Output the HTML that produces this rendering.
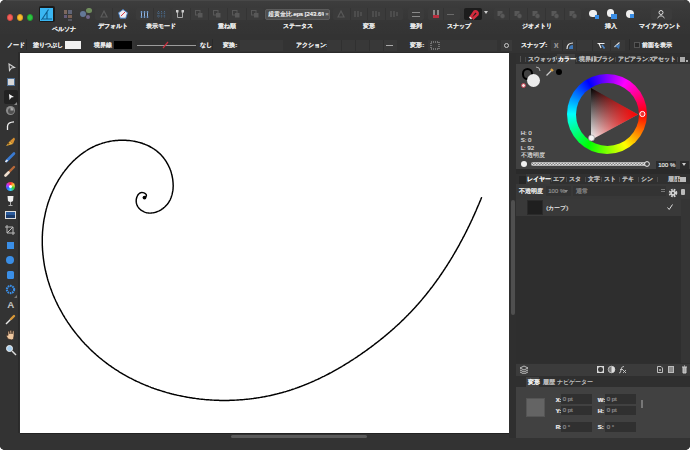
<!DOCTYPE html>
<html><head><meta charset="utf-8">
<style>
*{box-sizing:border-box;margin:0;padding:0}
html,body{width:690px;height:450px;overflow:hidden;background:#fff}
body{font-family:"Liberation Sans",sans-serif;position:relative}
#win{position:absolute;left:0;top:0;width:690px;height:450px;background:#333;border-radius:5px;overflow:hidden}
.a{position:absolute}
.t{position:absolute;white-space:nowrap;line-height:7px;text-shadow:0.45px 0 0 currentColor}
</style></head><body><div id="win">
<div class="a" style="left:0px;top:0px;width:690px;height:34px;background:linear-gradient(#3e3e3e,#393939 10px,#353535 24px,#343434);"></div>
<div class="a" style="left:0px;top:34px;width:690px;height:19px;background:#333;"></div>
<div class="a" style="left:6px;top:0px;width:678px;height:1px;background:#484848;"></div>
<div class="a" style="left:0px;top:53px;width:20px;height:397px;background:#333;"></div>
<div class="a" style="left:0px;top:433px;width:690px;height:17px;background:#333;"></div>
<div class="a" style="left:6.6px;top:14.1px;width:6.8px;height:6.8px;border-radius:50%;background:#f4605a;border:0.5px solid #d04a44"></div>
<div class="a" style="left:16.6px;top:14.1px;width:6.8px;height:6.8px;border-radius:50%;background:#f8bd30;border:0.5px solid #d49a20"></div>
<div class="a" style="left:26.6px;top:14.1px;width:6.8px;height:6.8px;border-radius:50%;background:#2dc443;border:0.5px solid #20a030"></div>
<div class="a" style="left:38.5px;top:5.5px;width:16px;height:16px;background:#1a1a1a;border-radius:2px"></div>
<div class="a" style="left:40px;top:7.5px;width:13px;height:13px;background:#3ab6f2;"></div>
<svg class="a" style="left:40px;top:7.5px" width="13" height="13"><path d="M1.5,12 L8.5,1.5 M7,4 L7,11.5 M3,11 L12,11" stroke="#0e5d8c" stroke-width="1.1" fill="none"/></svg>
<div class="t" style="left:64px;top:25.5px;font-size:6px;color:#e8e8e8;font-weight:bold;transform:translateX(-50%);">ペルソナ</div>
<div class="a" style="left:63.5px;top:10px;width:3.5px;height:3.5px;background:#8f7468;opacity:.8"></div>
<div class="a" style="left:68px;top:10px;width:3.5px;height:3.5px;background:#6c7088;opacity:.8"></div>
<div class="a" style="left:63.5px;top:14.5px;width:3.5px;height:3.5px;background:#706488;opacity:.8"></div>
<div class="a" style="left:68px;top:14.5px;width:3.5px;height:3.5px;background:#8c6c5c;opacity:.8"></div>
<div class="a" style="left:68px;top:19px;width:3.5px;height:2px;background:#555560;"></div>
<div class="a" style="left:80.4px;top:11px;width:6px;height:6px;border-radius:50%;background:#6c84a8;opacity:.85"></div>
<div class="a" style="left:86.4px;top:8.200000000000001px;width:5.2px;height:5.2px;border-radius:50%;background:#7a9c64;opacity:.85"></div>
<div class="a" style="left:86.2px;top:15.399999999999999px;width:4px;height:4px;border-radius:50%;background:#7c7098;opacity:.85"></div>
<div class="a" style="left:95px;top:8px;width:34px;height:12px;background:#3b3b3b;border-radius:2px"></div>
<div class="a" style="left:112px;top:8px;width:1px;height:12px;background:#343434;"></div>
<svg class="a" style="left:99px;top:9px" width="10" height="10"><path d="M2,8 L5,2 L8,8 Z" fill="none" stroke="#5c5c5c" stroke-width="1.2"/></svg>
<svg class="a" style="left:117px;top:8px" width="12" height="12"><polygon points="6,1.5 10.5,4.8 8.8,10.2 3.2,10.2 1.5,4.8" fill="#efedf2" stroke="#3f7cc4" stroke-width="0.9"/><path d="M4,8 L8,4" stroke="#d23848" stroke-width="1"/></svg>
<div class="t" style="left:113px;top:23px;font-size:6px;color:#e8e8e8;font-weight:bold;transform:translateX(-50%);">デフォルト</div>
<div class="a" style="left:136px;top:8px;width:34px;height:12px;background:#3b3b3b;border-radius:2px"></div>
<div class="a" style="left:153px;top:8px;width:1px;height:12px;background:#343434;"></div>
<svg class="a" style="left:140px;top:10px" width="9" height="9"><path d="M1.5,1 V8 M4.5,1 V8 M7.5,1 V8" stroke="#8fb6e6" stroke-width="1"/><path d="M0,2 H9 M0,7 H9" stroke="#4a6a90" stroke-width="0.8"/></svg>
<svg class="a" style="left:157px;top:10px" width="9" height="9"><path d="M1.5,1 V8 M4.5,1 V8 M7.5,1 V8 M0,3 H9 M0,6 H9" stroke="#4a6a8a" stroke-width="1" stroke-dasharray="1 1.2"/></svg>
<div class="t" style="left:161px;top:23px;font-size:6px;color:#e8e8e8;font-weight:bold;transform:translateX(-50%);">表示モード</div>
<div class="a" style="left:172px;top:8px;width:92px;height:12px;background:#3b3b3b;border-radius:2px"></div>
<div class="a" style="left:190px;top:8px;width:1px;height:12px;background:#343434;"></div>
<div class="a" style="left:208px;top:8px;width:1px;height:12px;background:#343434;"></div>
<div class="a" style="left:227px;top:8px;width:1px;height:12px;background:#343434;"></div>
<div class="a" style="left:246px;top:8px;width:1px;height:12px;background:#343434;"></div>
<svg class="a" style="left:175px;top:9px" width="10" height="10"><path d="M2.5,3 V8.5 H7.5 V3" fill="none" stroke="#aaa" stroke-width="1"/><rect x="1" y="1" width="2.5" height="2.5" fill="#ccc"/><rect x="6.5" y="1" width="2.5" height="2.5" fill="#ccc"/></svg>
<svg class="a" style="left:194px;top:9px" width="10" height="10"><rect x="1.5" y="1.5" width="4.5" height="4.5" fill="none" stroke="#585858" stroke-width="1"/><rect x="4" y="4" width="4.5" height="4.5" fill="#585858"/></svg>
<svg class="a" style="left:212px;top:9px" width="10" height="10"><rect x="1.5" y="1.5" width="4.5" height="4.5" fill="none" stroke="#585858" stroke-width="1"/><rect x="4" y="4" width="4.5" height="4.5" fill="#585858"/></svg>
<svg class="a" style="left:231px;top:9px" width="10" height="10"><rect x="1.5" y="1.5" width="4.5" height="4.5" fill="none" stroke="#585858" stroke-width="1"/><rect x="4" y="4" width="4.5" height="4.5" fill="#585858"/></svg>
<svg class="a" style="left:250px;top:9px" width="10" height="10"><rect x="1.5" y="1.5" width="4.5" height="4.5" fill="none" stroke="#585858" stroke-width="1"/><rect x="4" y="4" width="4.5" height="4.5" fill="#585858"/></svg>
<div class="t" style="left:227px;top:23px;font-size:6px;color:#e8e8e8;font-weight:bold;transform:translateX(-50%);">重ね順</div>
<div class="a" style="left:265px;top:8.5px;width:65px;height:11px;background:#4e4e4e;border-radius:2px;border:0.5px solid #5c5c5c"></div>
<div class="t" style="left:267.5px;top:10.5px;font-size:6px;color:#f0f0f0;font-weight:normal;width:56px;overflow:hidden">超黄金比.eps [243.6%]</div>
<div class="t" style="left:325px;top:10.5px;font-size:6px;color:#aaa;font-weight:normal;">×</div>
<div class="t" style="left:298px;top:23px;font-size:6px;color:#e8e8e8;font-weight:bold;transform:translateX(-50%);">ステータス</div>
<div class="a" style="left:333px;top:8px;width:70px;height:12px;background:#3b3b3b;border-radius:2px"></div>
<div class="a" style="left:350px;top:8px;width:1px;height:12px;background:#343434;"></div>
<div class="a" style="left:367px;top:8px;width:1px;height:12px;background:#343434;"></div>
<div class="a" style="left:385px;top:8px;width:1px;height:12px;background:#343434;"></div>
<svg class="a" style="left:336px;top:9px" width="10" height="10"><path d="M2,8 L5,2 L8,8 Z" fill="none" stroke="#585858" stroke-width="1.2"/></svg>
<svg class="a" style="left:353px;top:9px" width="10" height="10"><path d="M2,2 V8 M5,2 V8 M8,3 V7" stroke="#585858" stroke-width="1.3"/></svg>
<svg class="a" style="left:371px;top:9px" width="10" height="10"><path d="M2,2 V8 M5,2 V8 M8,3 V7" stroke="#585858" stroke-width="1.3"/></svg>
<svg class="a" style="left:389px;top:9px" width="10" height="10"><path d="M2,2 V8 M5,2 V8 M8,3 V7" stroke="#585858" stroke-width="1.3"/></svg>
<div class="t" style="left:369px;top:23px;font-size:6px;color:#e8e8e8;font-weight:bold;transform:translateX(-50%);">変形</div>
<div class="a" style="left:408px;top:8px;width:16px;height:12px;background:#3b3b3b;border-radius:2px"></div>
<div class="a" style="left:412px;top:12px;width:8px;height:1.2px;background:#8a8a8a;"></div>
<div class="a" style="left:412px;top:15.5px;width:8px;height:1.2px;background:#8a8a8a;"></div>
<div class="t" style="left:416px;top:23px;font-size:6px;color:#e8e8e8;font-weight:bold;transform:translateX(-50%);">整列</div>
<div class="a" style="left:428px;top:8px;width:32px;height:12px;background:#3b3b3b;border-radius:2px"></div>
<div class="a" style="left:443px;top:8px;width:1px;height:12px;background:#343434;"></div>
<div class="a" style="left:433px;top:10px;width:1.5px;height:8px;background:#8a8a8a;"></div>
<div class="a" style="left:437px;top:10px;width:1.5px;height:8px;background:#8a8a8a;"></div>
<div class="a" style="left:432.5px;top:14.5px;width:6px;height:3px;background:#b83040;"></div>
<div class="a" style="left:447px;top:13.5px;width:7px;height:1.5px;background:#6a6a6a;"></div>
<div class="a" style="left:464px;top:7.5px;width:17.5px;height:12.5px;background:#1c1c1c;border-radius:2px"></div>
<svg class="a" style="left:466px;top:8px" width="14" height="12"><path d="M4.5,9.5 L8.5,3.5 A2.3,2.3 0 0 1 11.5,6.5 L6.5,11" stroke="#d42a3c" stroke-width="2.6" fill="none"/><path d="M3.5,9 L5.5,11" stroke="#eee" stroke-width="1.2"/></svg>
<svg class="a" style="left:484px;top:11px" width="5" height="4"><polygon points="0,0 4,0 2,3" fill="#ccc"/></svg>
<div class="t" style="left:459px;top:23px;font-size:6px;color:#e8e8e8;font-weight:bold;transform:translateX(-50%);">スナップ</div>
<div class="a" style="left:494px;top:8px;width:87px;height:12px;background:#3b3b3b;border-radius:2px"></div>
<div class="a" style="left:509px;top:8px;width:1px;height:12px;background:#343434;"></div>
<div class="a" style="left:527px;top:8px;width:1px;height:12px;background:#343434;"></div>
<div class="a" style="left:545px;top:8px;width:1px;height:12px;background:#343434;"></div>
<div class="a" style="left:564px;top:8px;width:1px;height:12px;background:#343434;"></div>
<svg class="a" style="left:496px;top:9px" width="10" height="10"><rect x="1.5" y="2" width="5" height="5" fill="#585858"/><circle cx="6.5" cy="7" r="2.5" fill="#585858" stroke="#3c3c3c" stroke-width="0.6"/></svg>
<svg class="a" style="left:513px;top:9px" width="10" height="10"><rect x="1.5" y="2" width="5" height="5" fill="#585858"/><circle cx="6.5" cy="7" r="2.5" fill="#585858" stroke="#3c3c3c" stroke-width="0.6"/></svg>
<svg class="a" style="left:531px;top:9px" width="10" height="10"><rect x="1.5" y="2" width="5" height="5" fill="#585858"/><circle cx="6.5" cy="7" r="2.5" fill="#585858" stroke="#3c3c3c" stroke-width="0.6"/></svg>
<svg class="a" style="left:550px;top:9px" width="10" height="10"><rect x="1.5" y="2" width="5" height="5" fill="#585858"/><circle cx="6.5" cy="7" r="2.5" fill="#585858" stroke="#3c3c3c" stroke-width="0.6"/></svg>
<svg class="a" style="left:568px;top:9px" width="10" height="10"><rect x="1.5" y="2" width="5" height="5" fill="#585858"/><circle cx="6.5" cy="7" r="2.5" fill="#585858" stroke="#3c3c3c" stroke-width="0.6"/></svg>
<div class="t" style="left:537px;top:23px;font-size:6px;color:#e8e8e8;font-weight:bold;transform:translateX(-50%);">ジオメトリ</div>
<div class="a" style="left:585px;top:8px;width:55px;height:12px;background:#393939;border-radius:2px"></div>
<div class="a" style="left:589.4px;top:9.9px;width:7.2px;height:7.2px;border-radius:50%;background:#f0f0f0;"></div>
<div class="a" style="left:595px;top:15px;width:4px;height:4px;background:#3a8ee6;"></div>
<div class="a" style="left:606.9px;top:9.4px;width:7.2px;height:7.2px;border-radius:50%;background:#f0f0f0;"></div>
<div class="a" style="left:611px;top:13.5px;width:5.5px;height:5px;background:#3a8ee6;"></div>
<div class="a" style="left:626px;top:10.2px;width:8px;height:8px;border-radius:50%;background:#f0f0f0;"></div>
<div class="a" style="left:630px;top:14.2px;width:4px;height:4.2px;background:#3a8ee6;"></div>
<div class="t" style="left:611px;top:22.5px;font-size:6px;color:#e8e8e8;font-weight:bold;transform:translateX(-50%);">挿入</div>
<div class="a" style="left:651px;top:8px;width:21px;height:12px;background:#3b3b3b;border-radius:2px"></div>
<svg class="a" style="left:656px;top:9px" width="10" height="10"><circle cx="5" cy="3.5" r="2" fill="none" stroke="#ddd" stroke-width="1"/><path d="M1.5,9 Q5,4.5 8.5,9" fill="none" stroke="#ddd" stroke-width="1"/></svg>
<div class="t" style="left:660px;top:22.5px;font-size:6px;color:#e8e8e8;font-weight:bold;transform:translateX(-50%);">マイアカウント</div>
<div class="t" style="left:7px;top:42px;font-size:6px;color:#e8e8e8;font-weight:bold;">ノード</div>
<div class="a" style="left:26px;top:39px;width:1px;height:11px;background:#2a2a2a;"></div>
<div class="t" style="left:33px;top:42px;font-size:6px;color:#e8e8e8;font-weight:bold;">塗りつぶし</div>
<div class="a" style="left:65px;top:41px;width:16px;height:8px;background:#f0f0f0;"></div>
<div class="t" style="left:94px;top:42px;font-size:6px;color:#e8e8e8;font-weight:bold;">境界線</div>
<div class="a" style="left:114px;top:40.5px;width:18px;height:8.5px;background:#000;"></div>
<div class="a" style="left:135px;top:40px;width:62px;height:10px;background:#303030;"></div>
<div class="a" style="left:137px;top:45px;width:59px;height:1px;background:#9a9a9a;"></div>
<svg class="a" style="left:162px;top:41px" width="7" height="8"><path d="M1,7 L6,1" stroke="#c83040" stroke-width="1.2"/></svg>
<div class="t" style="left:200px;top:42px;font-size:6px;color:#e8e8e8;font-weight:bold;">なし</div>
<div class="a" style="left:212px;top:39px;width:1px;height:11px;background:#2a2a2a;"></div>
<div class="t" style="left:223px;top:42px;font-size:6px;color:#e8e8e8;font-weight:bold;">変換:</div>
<div class="a" style="left:240px;top:40px;width:43px;height:10.5px;background:#383838;"></div>
<div class="t" style="left:296px;top:42px;font-size:6px;color:#e8e8e8;font-weight:bold;">アクション:</div>
<div class="a" style="left:327px;top:40px;width:70px;height:10.5px;background:#383838;"></div>
<div class="a" style="left:341px;top:40px;width:1px;height:10.5px;background:#303030;"></div>
<div class="a" style="left:355px;top:40px;width:1px;height:10.5px;background:#303030;"></div>
<div class="a" style="left:369px;top:40px;width:1px;height:10.5px;background:#303030;"></div>
<div class="a" style="left:383px;top:40px;width:1px;height:10.5px;background:#303030;"></div>
<div class="a" style="left:386px;top:45px;width:7px;height:1px;background:#aaa;"></div>
<div class="t" style="left:410px;top:42px;font-size:6px;color:#e8e8e8;font-weight:bold;">変形:</div>
<div class="a" style="left:428px;top:40px;width:69px;height:10.5px;background:#383838;"></div>
<svg class="a" style="left:430px;top:41px" width="10" height="9"><rect x="1" y="1" width="8" height="7" fill="none" stroke="#ccc" stroke-width="0.8" stroke-dasharray="1 1"/></svg>
<div class="a" style="left:501px;top:40px;width:11px;height:10.5px;background:#3a3a3a;"></div>
<div class="a" style="left:504.0px;top:42.5px;width:5.0px;height:5.0px;border-radius:50%;background:none;border:1px solid #ccc"></div>
<div class="t" style="left:521px;top:42px;font-size:6px;color:#e8e8e8;font-weight:bold;">スナップ:</div>
<div class="a" style="left:551px;top:40px;width:74px;height:10.5px;background:#383838;"></div>
<div class="a" style="left:562px;top:40px;width:1px;height:10.5px;background:#303030;"></div>
<div class="a" style="left:576px;top:40px;width:1px;height:10.5px;background:#303030;"></div>
<div class="a" style="left:592px;top:40px;width:1px;height:10.5px;background:#303030;"></div>
<div class="a" style="left:610px;top:40px;width:1px;height:10.5px;background:#303030;"></div>
<div class="t" style="left:554px;top:42px;font-size:6px;color:#bbb;font-weight:normal;">)(</div>
<svg class="a" style="left:565px;top:41px" width="10" height="9"><path d="M2,8 Q2,2 8,2" stroke="#e8e8e8" stroke-width="1.2" fill="none"/><path d="M4,8 Q4,4 8,4 L8,8 Z" fill="#3f78b8"/></svg>
<svg class="a" style="left:596px;top:41px" width="10" height="9"><path d="M1.5,2.5 L8.5,2.5 M3,2.5 L5,7" stroke="#eee" stroke-width="1.2" fill="none"/><path d="M6,4 L8.5,7.5" stroke="#4a86c8" stroke-width="1.6"/></svg>
<svg class="a" style="left:613px;top:41px" width="9" height="9"><path d="M1.5,6 L6.5,1.5" stroke="#ddd" stroke-width="1.2"/><path d="M2,5 L6,8 L7,3 Z" fill="#3f78b8"/></svg>
<div class="a" style="left:629px;top:39px;width:1px;height:11px;background:#2a2a2a;"></div>
<div class="a" style="left:634px;top:42px;width:6px;height:6px;background:#2a2a2a;border:1px solid #555"></div>
<div class="t" style="left:642px;top:42px;font-size:6px;color:#e8e8e8;font-weight:bold;">前面を表示</div>
<div class="a" style="left:18px;top:53px;width:1px;height:380px;background:#2a2a2a;"></div>
<div class="a" style="left:19px;top:53px;width:1px;height:380px;background:#2e2e2e;"></div>
<svg class="a" style="left:6px;top:62px" width="10" height="10"><path d="M3,2 L8.5,5.5 L5.5,6 L3.5,8.5 Z" fill="#333" stroke="#cfcfcf" stroke-width="1.1"/></svg>
<div class="a" style="left:6.5px;top:77.5px;width:8px;height:8px;background:#4f6f94;"></div>
<div class="a" style="left:7.5px;top:78.5px;width:6px;height:6px;background:#d8d8d8;"></div>
<div class="a" style="left:3.5px;top:89.5px;width:14px;height:14px;background:#222;border-radius:2px"></div>
<svg class="a" style="left:6px;top:92px" width="10" height="10"><path d="M3,2 L8,5 L5.3,5.6 L3.5,8 Z" fill="#f4f4f4"/></svg>
<svg class="a" style="left:14px;top:102px" width="3" height="3"><polygon points="3,0 3,3 0,3" fill="#888"/></svg>
<div class="a" style="left:6.0px;top:106.3px;width:9.0px;height:9.0px;border-radius:50%;background:#8c8c8c;"></div>
<div class="a" style="left:7.5px;top:107.8px;width:6px;height:6px;border-radius:50%;background:#505050;"></div>
<svg class="a" style="left:6px;top:106px" width="9" height="9"><path d="M4.5,4.5 L4.5,1.5 A3,3 0 0 1 7.5,4.5 Z" fill="#aaa"/></svg>
<svg class="a" style="left:5px;top:120px" width="11" height="11"><path d="M2.5,10 L2.5,6 Q3,2 9,1.8" stroke="#eee" stroke-width="1.3" fill="none"/></svg>
<svg class="a" style="left:4px;top:136px" width="12" height="12"><path d="M2,10 L6,5 L9,8 Z" fill="#e8b040"/><path d="M6,5 L10,1.5 L11,3 L9,8" fill="#d89030"/><circle cx="4.5" cy="7.5" r="1" fill="#7a4a10"/></svg>
<svg class="a" style="left:4px;top:151px" width="12" height="12"><path d="M2.5,10 L10,2.5" stroke="#3a7ad0" stroke-width="2.6" stroke-linecap="round"/><path d="M1.5,11 L3.5,9" stroke="#eee" stroke-width="1.6"/></svg>
<svg class="a" style="left:4px;top:165px" width="12" height="12"><path d="M5,7 L10,2" stroke="#b86a3a" stroke-width="2.4" stroke-linecap="round"/><path d="M1.5,10.5 L4.5,7.5" stroke="#f0e0d0" stroke-width="2.6" stroke-linecap="round"/></svg>
<div class="a" style="left:5.699999999999999px;top:181.5px;width:9.0px;height:9.0px;border-radius:50%;background:conic-gradient(from 0deg,#f33,#fc3,#3c3,#3cf,#36f,#c3f,#f33);"></div>
<div class="a" style="left:8.7px;top:184.5px;width:3.0px;height:3.0px;border-radius:50%;background:#fff;"></div>
<svg class="a" style="left:6px;top:195px" width="9" height="12"><path d="M1.5,1 L7.5,1 L7,6 Q4.5,8 2,6 Z" fill="#eee"/><path d="M4.5,7 L4.5,10 M2.5,10.5 L6.5,10.5" stroke="#aaa" stroke-width="1"/></svg>
<div class="a" style="left:5px;top:211px;width:11px;height:8px;background:#ddd;"></div>
<div class="a" style="left:6px;top:212px;width:9px;height:6px;background:#2a5a9a;"></div>
<div class="a" style="left:6px;top:215px;width:9px;height:3px;background:#1a3a6a;"></div>
<svg class="a" style="left:4px;top:224px" width="12" height="12"><path d="M3,1 V9 H11 M1,3 H9 V11 M3,9 L9,3" stroke="#bbb" stroke-width="1" fill="none"/></svg>
<div class="a" style="left:6.5px;top:241.5px;width:7.5px;height:7.5px;background:#3a8ee6;"></div>
<div class="a" style="left:6.299999999999999px;top:256.1px;width:7.8px;height:7.8px;border-radius:50%;background:#3a8ee6;"></div>
<div class="a" style="left:6.5px;top:271px;width:7.5px;height:7.5px;background:#3a8ee6;border-radius:1.5px"></div>
<svg class="a" style="left:5px;top:284px" width="11" height="11"><circle cx="5.5" cy="5.5" r="3.6" fill="none" stroke="#3a8ee6" stroke-width="2.2" stroke-dasharray="1.6 0.7"/><circle cx="5.5" cy="5.5" r="1.5" fill="#1a3a6a"/></svg>
<svg class="a" style="left:14px;top:295px" width="3" height="3"><polygon points="3,0 3,3 0,3" fill="#777"/></svg>
<div class="t" style="left:10.5px;top:301.5px;font-size:9px;color:#ccc;font-weight:normal;transform:translateX(-50%);font-family:"Liberation Serif",serif;line-height:9px">A</div>
<svg class="a" style="left:4px;top:314px" width="12" height="12"><path d="M2,10 L7,5" stroke="#e8e8e8" stroke-width="1.4"/><path d="M7,5 L10,2" stroke="#d89838" stroke-width="2.4" stroke-linecap="round"/></svg>
<svg class="a" style="left:5px;top:329px" width="11" height="12"><path d="M3,10 Q1,7 1.5,5.5 L3,6.5 L3,2.5 Q4,1.5 4.5,2.5 L5,5 L5,1.5 Q6,0.8 6.5,1.5 L7,5 L7.5,2 Q8.5,1.5 9,2.5 L9,7 Q9,10 7,11 Z" fill="#f0c8a0" stroke="#3a2a20" stroke-width="0.7"/></svg>
<div class="a" style="left:5.7px;top:344.7px;width:7.6px;height:7.6px;border-radius:50%;background:#a8d0f0;border:1px solid #eee"></div>
<svg class="a" style="left:11px;top:350px" width="6" height="6"><path d="M1,1 L5,5" stroke="#ddd" stroke-width="1.4"/></svg>
<div class="a" style="left:18px;top:52px;width:491px;height:1px;background:#2b2b2b;"></div>
<div class="a" style="left:20px;top:53px;width:489px;height:380px;background:#fff;"></div>
<svg class="a" style="left:0;top:0" width="690" height="450"><path d="M481.5,197.7 L481.1,198.6 L480.8,199.5 L480.4,200.4 L480.0,201.4 L479.6,202.3 L479.2,203.2 L478.8,204.2 L478.4,205.1 L478.0,206.0 L477.6,206.9 L477.2,207.9 L476.8,208.8 L476.4,209.7 L476.0,210.7 L475.6,211.6 L475.2,212.5 L474.8,213.4 L474.4,214.4 L474.0,215.3 L473.6,216.2 L473.1,217.1 L472.7,218.0 L472.3,219.0 L471.9,219.9 L471.4,220.8 L471.0,221.7 L470.6,222.6 L470.1,223.6 L469.7,224.5 L469.3,225.4 L468.8,226.3 L468.4,227.2 L467.9,228.1 L467.5,229.0 L467.0,229.9 L466.6,230.9 L466.1,231.8 L465.6,232.7 L465.2,233.6 L464.7,234.5 L464.3,235.4 L463.8,236.3 L463.3,237.2 L462.8,238.1 L462.4,239.0 L461.9,239.9 L461.4,240.8 L460.9,241.7 L460.4,242.6 L459.9,243.5 L459.5,244.4 L459.0,245.3 L458.5,246.2 L458.0,247.1 L457.5,248.0 L457.0,248.8 L456.5,249.7 L456.0,250.6 L455.5,251.5 L454.9,252.4 L454.4,253.3 L453.9,254.1 L453.4,255.0 L452.9,255.9 L452.4,256.8 L451.8,257.7 L451.3,258.5 L450.8,259.4 L450.2,260.3 L449.7,261.1 L449.2,262.0 L448.6,262.9 L448.1,263.7 L447.5,264.6 L447.0,265.5 L446.4,266.3 L445.9,267.2 L445.3,268.0 L444.8,268.9 L444.2,269.7 L443.6,270.6 L443.1,271.4 L442.5,272.3 L441.9,273.1 L441.4,274.0 L440.8,274.8 L440.2,275.6 L439.6,276.5 L439.1,277.3 L438.5,278.2 L437.9,279.0 L437.3,279.8 L436.7,280.6 L436.1,281.5 L435.5,282.3 L434.9,283.1 L434.3,283.9 L433.7,284.8 L433.1,285.6 L432.5,286.4 L431.9,287.2 L431.2,288.0 L430.6,288.8 L430.0,289.6 L429.4,290.4 L428.7,291.2 L428.1,292.0 L427.5,292.8 L426.9,293.6 L426.2,294.4 L425.6,295.2 L424.9,296.0 L424.3,296.8 L423.6,297.5 L423.0,298.3 L422.3,299.1 L421.7,299.9 L421.0,300.7 L420.4,301.4 L419.7,302.2 L419.0,303.0 L418.4,303.7 L417.7,304.5 L417.0,305.2 L416.3,306.0 L415.7,306.8 L415.0,307.5 L414.3,308.3 L413.6,309.0 L412.9,309.7 L412.2,310.5 L411.5,311.2 L410.8,312.0 L410.1,312.7 L409.4,313.4 L408.7,314.1 L408.0,314.9 L407.3,315.6 L406.6,316.3 L405.9,317.0 L405.1,317.7 L404.4,318.5 L403.7,319.2 L403.0,319.9 L402.2,320.6 L401.5,321.3 L400.8,322.0 L400.0,322.7 L399.3,323.4 L398.6,324.1 L397.8,324.8 L397.1,325.5 L396.3,326.1 L395.6,326.8 L394.8,327.5 L394.1,328.2 L393.3,328.9 L392.6,329.5 L391.8,330.2 L391.0,330.9 L390.3,331.5 L389.5,332.2 L388.7,332.9 L388.0,333.5 L387.2,334.2 L386.4,334.8 L385.6,335.5 L384.9,336.1 L384.1,336.8 L383.3,337.4 L382.5,338.1 L381.7,338.7 L380.9,339.3 L380.1,340.0 L379.3,340.6 L378.5,341.2 L377.7,341.9 L376.9,342.5 L376.1,343.1 L375.3,343.7 L374.5,344.3 L373.7,345.0 L372.9,345.6 L372.1,346.2 L371.3,346.8 L370.5,347.4 L369.6,348.0 L368.8,348.6 L368.0,349.2 L367.2,349.8 L366.4,350.4 L365.5,351.0 L364.7,351.6 L363.9,352.2 L363.0,352.7 L362.2,353.3 L361.4,353.9 L360.5,354.5 L359.7,355.1 L358.8,355.6 L358.0,356.2 L357.2,356.8 L356.3,357.3 L355.5,357.9 L354.6,358.5 L353.8,359.0 L352.9,359.6 L352.1,360.1 L351.2,360.7 L350.3,361.2 L349.5,361.8 L348.6,362.3 L347.8,362.9 L346.9,363.4 L346.0,363.9 L345.2,364.5 L344.3,365.0 L343.4,365.5 L342.6,366.0 L341.7,366.6 L340.8,367.1 L339.9,367.6 L339.0,368.1 L338.2,368.6 L337.3,369.1 L336.4,369.6 L335.5,370.1 L334.6,370.6 L333.7,371.1 L332.8,371.6 L332.0,372.1 L331.1,372.6 L330.2,373.0 L329.3,373.5 L328.4,374.0 L327.5,374.5 L326.6,374.9 L325.7,375.4 L324.8,375.8 L323.9,376.3 L322.9,376.7 L322.0,377.2 L321.1,377.6 L320.2,378.1 L319.3,378.5 L318.4,379.0 L317.5,379.4 L316.5,379.8 L315.6,380.2 L314.7,380.7 L313.8,381.1 L312.8,381.5 L311.9,381.9 L311.0,382.3 L310.1,382.7 L309.1,383.1 L308.2,383.5 L307.2,383.9 L306.3,384.3 L305.4,384.6 L304.4,385.0 L303.5,385.4 L302.5,385.8 L301.6,386.1 L300.7,386.5 L299.7,386.8 L298.8,387.2 L297.8,387.5 L296.8,387.9 L295.9,388.2 L294.9,388.6 L294.0,388.9 L293.0,389.2 L292.1,389.5 L291.1,389.9 L290.1,390.2 L289.2,390.5 L288.2,390.8 L287.2,391.1 L286.3,391.4 L285.3,391.7 L284.3,391.9 L283.3,392.2 L282.4,392.5 L281.4,392.8 L280.4,393.0 L279.4,393.3 L278.4,393.6 L277.4,393.8 L276.5,394.1 L275.5,394.3 L274.5,394.5 L273.5,394.8 L272.5,395.0 L271.5,395.2 L270.5,395.5 L269.5,395.7 L268.5,395.9 L267.5,396.1 L266.5,396.3 L265.5,396.5 L264.5,396.7 L263.5,396.9 L262.5,397.0 L261.5,397.2 L260.5,397.4 L259.5,397.6 L258.5,397.7 L257.5,397.9 L256.5,398.0 L255.5,398.2 L254.4,398.3 L253.4,398.5 L252.4,398.6 L251.4,398.7 L250.4,398.9 L249.4,399.0 L248.4,399.1 L247.3,399.2 L246.3,399.3 L245.3,399.4 L244.3,399.5 L243.3,399.6 L242.3,399.7 L241.2,399.8 L240.2,399.8 L239.2,399.9 L238.2,400.0 L237.1,400.0 L236.1,400.1 L235.1,400.1 L234.1,400.2 L233.1,400.2 L232.0,400.3 L231.0,400.3 L230.0,400.3 L229.0,400.4 L227.9,400.4 L226.9,400.4 L225.9,400.4 L224.9,400.4 L223.8,400.4 L222.8,400.4 L221.8,400.4 L220.8,400.4 L219.7,400.4 L218.7,400.3 L217.7,400.3 L216.7,400.3 L215.6,400.2 L214.6,400.2 L213.6,400.1 L212.6,400.1 L211.6,400.0 L210.5,400.0 L209.5,399.9 L208.5,399.8 L207.5,399.7 L206.4,399.7 L205.4,399.6 L204.4,399.5 L203.4,399.4 L202.4,399.3 L201.4,399.2 L200.3,399.1 L199.3,399.0 L198.3,398.8 L197.3,398.7 L196.3,398.6 L195.3,398.4 L194.3,398.3 L193.2,398.2 L192.2,398.0 L191.2,397.8 L190.2,397.7 L189.2,397.5 L188.2,397.4 L187.2,397.2 L186.2,397.0 L185.2,396.8 L184.2,396.6 L183.2,396.4 L182.2,396.2 L181.2,396.0 L180.2,395.8 L179.2,395.6 L178.2,395.4 L177.2,395.2 L176.2,394.9 L175.2,394.7 L174.2,394.5 L173.2,394.2 L172.2,394.0 L171.2,393.7 L170.3,393.5 L169.3,393.2 L168.3,392.9 L167.3,392.7 L166.3,392.4 L165.4,392.1 L164.4,391.8 L163.4,391.5 L162.4,391.2 L161.5,390.9 L160.5,390.6 L159.5,390.3 L158.6,390.0 L157.6,389.7 L156.6,389.4 L155.7,389.0 L154.7,388.7 L153.8,388.4 L152.8,388.0 L151.9,387.7 L150.9,387.3 L150.0,386.9 L149.0,386.6 L148.1,386.2 L147.1,385.8 L146.2,385.5 L145.3,385.1 L144.3,384.7 L143.4,384.3 L142.5,383.9 L141.5,383.5 L140.6,383.1 L139.7,382.7 L138.8,382.2 L137.9,381.8 L136.9,381.4 L136.0,381.0 L135.1,380.5 L134.2,380.1 L133.3,379.6 L132.4,379.2 L131.5,378.7 L130.6,378.2 L129.7,377.8 L128.8,377.3 L127.9,376.8 L127.0,376.3 L126.2,375.9 L125.3,375.4 L124.4,374.9 L123.5,374.4 L122.6,373.9 L121.8,373.3 L120.9,372.8 L120.0,372.3 L119.2,371.8 L118.3,371.2 L117.5,370.7 L116.6,370.2 L115.8,369.6 L114.9,369.1 L114.1,368.5 L113.2,367.9 L112.4,367.4 L111.6,366.8 L110.8,366.2 L109.9,365.6 L109.1,365.1 L108.3,364.5 L107.5,363.9 L106.7,363.3 L105.9,362.7 L105.0,362.0 L104.2,361.4 L103.4,360.8 L102.7,360.2 L101.9,359.5 L101.1,358.9 L100.3,358.3 L99.5,357.6 L98.7,357.0 L98.0,356.3 L97.2,355.7 L96.4,355.0 L95.7,354.3 L94.9,353.6 L94.2,353.0 L93.4,352.3 L92.7,351.6 L91.9,350.9 L91.2,350.2 L90.5,349.5 L89.7,348.8 L89.0,348.1 L88.3,347.3 L87.6,346.6 L86.9,345.9 L86.1,345.1 L85.4,344.4 L84.7,343.7 L84.1,342.9 L83.4,342.2 L82.7,341.4 L82.0,340.7 L81.3,339.9 L80.6,339.1 L80.0,338.3 L79.3,337.6 L78.7,336.8 L78.0,336.0 L77.4,335.2 L76.7,334.4 L76.1,333.6 L75.4,332.8 L74.8,332.0 L74.2,331.2 L73.6,330.4 L72.9,329.6 L72.3,328.8 L71.7,327.9 L71.1,327.1 L70.5,326.3 L70.0,325.4 L69.4,324.6 L68.8,323.8 L68.2,322.9 L67.6,322.1 L67.1,321.2 L66.5,320.3 L66.0,319.5 L65.4,318.6 L64.9,317.8 L64.4,316.9 L63.8,316.0 L63.3,315.1 L62.8,314.3 L62.3,313.4 L61.8,312.5 L61.3,311.6 L60.8,310.7 L60.3,309.8 L59.8,308.9 L59.3,308.0 L58.8,307.1 L58.4,306.2 L57.9,305.3 L57.4,304.4 L57.0,303.4 L56.6,302.5 L56.1,301.6 L55.7,300.7 L55.3,299.7 L54.8,298.8 L54.4,297.9 L54.0,296.9 L53.6,296.0 L53.2,295.1 L52.8,294.1 L52.5,293.2 L52.1,292.2 L51.7,291.3 L51.4,290.3 L51.0,289.4 L50.7,288.4 L50.3,287.4 L50.0,286.5 L49.6,285.5 L49.3,284.5 L49.0,283.6 L48.7,282.6 L48.4,281.6 L48.1,280.7 L47.8,279.7 L47.5,278.7 L47.3,277.7 L47.0,276.7 L46.7,275.8 L46.5,274.8 L46.2,273.8 L46.0,272.8 L45.8,271.8 L45.5,270.8 L45.3,269.8 L45.1,268.8 L44.9,267.8 L44.7,266.8 L44.5,265.8 L44.3,264.8 L44.2,263.8 L44.0,262.8 L43.9,261.8 L43.7,260.8 L43.6,259.8 L43.4,258.7 L43.3,257.7 L43.2,256.7 L43.1,255.7 L42.9,254.7 L42.9,253.7 L42.8,252.7 L42.7,251.7 L42.6,250.6 L42.5,249.6 L42.5,248.6 L42.4,247.6 L42.4,246.6 L42.3,245.5 L42.3,244.5 L42.3,243.5 L42.3,242.5 L42.3,241.5 L42.3,240.5 L42.3,239.4 L42.3,238.4 L42.3,237.4 L42.3,236.4 L42.4,235.4 L42.4,234.4 L42.5,233.3 L42.5,232.3 L42.6,231.3 L42.7,230.3 L42.8,229.3 L42.9,228.3 L43.0,227.3 L43.1,226.3 L43.2,225.3 L43.3,224.3 L43.5,223.3 L43.6,222.2 L43.8,221.2 L43.9,220.2 L44.1,219.2 L44.3,218.2 L44.5,217.3 L44.7,216.3 L44.9,215.3 L45.1,214.3 L45.3,213.3 L45.5,212.3 L45.8,211.3 L46.0,210.3 L46.2,209.4 L46.5,208.4 L46.8,207.4 L47.0,206.4 L47.3,205.5 L47.6,204.5 L47.9,203.5 L48.2,202.6 L48.6,201.6 L48.9,200.6 L49.2,199.7 L49.6,198.7 L49.9,197.8 L50.3,196.8 L50.7,195.9 L51.0,195.0 L51.4,194.0 L51.8,193.1 L52.2,192.2 L52.6,191.2 L53.1,190.3 L53.5,189.4 L53.9,188.5 L54.4,187.6 L54.8,186.6 L55.3,185.7 L55.8,184.8 L56.3,183.9 L56.8,183.0 L57.3,182.2 L57.8,181.3 L58.3,180.4 L58.8,179.5 L59.4,178.7 L59.9,177.8 L60.5,176.9 L61.0,176.1 L61.6,175.2 L62.2,174.4 L62.8,173.5 L63.3,172.7 L64.0,171.9 L64.6,171.1 L65.2,170.3 L65.8,169.5 L66.5,168.7 L67.1,167.9 L67.8,167.1 L68.4,166.3 L69.1,165.6 L69.8,164.8 L70.5,164.0 L71.2,163.3 L71.9,162.6 L72.6,161.8 L73.3,161.1 L74.0,160.4 L74.8,159.7 L75.5,159.0 L76.2,158.4 L77.0,157.7 L77.8,157.0 L78.6,156.4 L79.3,155.7 L80.1,155.1 L80.9,154.5 L81.7,153.9 L82.5,153.3 L83.4,152.7 L84.2,152.1 L85.0,151.6 L85.9,151.0 L86.7,150.5 L87.6,149.9 L88.4,149.4 L89.3,148.9 L90.2,148.4 L91.1,147.9 L92.0,147.5 L92.9,147.0 L93.8,146.6 L94.7,146.2 L95.6,145.7 L96.6,145.3 L97.5,145.0 L98.4,144.6 L99.4,144.2 L100.4,143.9 L101.3,143.6 L102.3,143.2 L103.3,142.9 L104.3,142.7 L105.3,142.4 L106.3,142.1 L107.3,141.9 L108.3,141.7 L109.3,141.5 L110.3,141.3 L111.3,141.1 L112.4,140.9 L113.4,140.8 L114.4,140.7 L115.5,140.5 L116.5,140.4 L117.6,140.4 L118.6,140.3 L119.7,140.2 L120.7,140.2 L121.8,140.2 L122.8,140.2 L123.9,140.2 L124.9,140.2 L126.0,140.3 L127.0,140.4 L128.1,140.4 L129.1,140.5 L130.1,140.6 L131.2,140.8 L132.2,140.9 L133.2,141.1 L134.3,141.3 L135.3,141.5 L136.3,141.7 L137.3,141.9 L138.3,142.2 L139.3,142.4 L140.3,142.7 L141.3,143.0 L142.2,143.3 L143.2,143.7 L144.2,144.0 L145.1,144.4 L146.1,144.8 L147.0,145.2 L147.9,145.6 L148.8,146.0 L149.7,146.5 L150.6,147.0 L151.5,147.5 L152.3,148.0 L153.2,148.5 L154.0,149.0 L154.8,149.6 L155.7,150.2 L156.4,150.8 L157.2,151.4 L158.0,152.1 L158.7,152.7 L159.5,153.4 L160.2,154.1 L160.9,154.8 L161.6,155.5 L162.2,156.3 L162.9,157.0 L163.5,157.8 L164.1,158.6 L164.7,159.4 L165.3,160.2 L165.9,161.1 L166.4,161.9 L166.9,162.8 L167.4,163.7 L167.9,164.6 L168.4,165.5 L168.8,166.4 L169.3,167.3 L169.7,168.2 L170.1,169.2 L170.4,170.1 L170.8,171.1 L171.1,172.1 L171.4,173.1 L171.6,174.0 L171.9,175.0 L172.1,176.0 L172.3,177.0 L172.5,178.1 L172.7,179.1 L172.8,180.1 L172.9,181.1 L173.0,182.1 L173.1,183.2 L173.1,184.2 L173.2,185.2 L173.2,186.3 L173.1,187.3 L173.1,188.3 L173.0,189.4 L172.9,190.4 L172.7,191.4 L172.5,192.4 L172.3,193.4 L172.1,194.4 L171.8,195.4 L171.5,196.3 L171.2,197.3 L170.8,198.2 L170.4,199.2 L170.0,200.1 L169.5,201.0 L169.0,201.8 L168.5,202.7 L167.9,203.5 L167.3,204.3 L166.6,205.1 L165.9,205.8 L165.2,206.6 L164.4,207.3 L163.6,207.9 L162.8,208.6 L161.9,209.2 L161.0,209.8 L160.1,210.3 L159.2,210.8 L158.3,211.2 L157.3,211.6 L156.3,212.0 L155.4,212.3 L154.4,212.6 L153.4,212.8 L152.4,212.9 L151.4,213.0 L150.4,213.1 L149.4,213.1 L148.4,213.0 L147.4,212.9 L146.5,212.7 L145.5,212.4 L144.6,212.1 L143.7,211.7 L142.8,211.2 L141.9,210.7 L141.0,210.1 L140.3,209.5 L139.5,208.8 L138.8,208.0 L138.2,207.2 L137.6,206.3 L137.2,205.4 L136.8,204.5 L136.5,203.5 L136.3,202.4 L136.2,201.4 L136.2,200.3 L136.3,199.2 L136.6,198.0 L136.9,197.0 L137.4,196.0 L137.9,195.0 L138.5,194.2 L139.3,193.5 L140.1,193.0 L140.9,192.6 L141.9,192.5 L142.9,192.6 L144.0,192.9 L144.9,193.3 L145.7,193.9 L146.2,194.6 L146.4,195.5 L146.2,196.3 L145.5,197.2 L144.3,197.8" fill="none" stroke="#000" stroke-width="1.45" stroke-linecap="round"/><circle cx="144.5" cy="197.6" r="1.9" fill="#000"/></svg>
<div class="a" style="left:20px;top:433px;width:489px;height:1px;background:#232323;"></div>
<div class="a" style="left:231px;top:435px;width:136px;height:3px;background:#5a5a5a;border-radius:1.5px"></div>
<div class="a" style="left:509px;top:53px;width:181px;height:385px;background:#2f2f2f;"></div>
<div class="a" style="left:511px;top:200px;width:4px;height:115px;background:#4f4f4f;border-radius:2px"></div>
<div class="a" style="left:516px;top:54px;width:174px;height:9.5px;background:#303030;"></div>
<div class="a" style="left:519.5px;top:56px;width:1px;height:6px;background:#555;"></div>
<div class="t" style="left:528px;top:55.5px;font-size:6px;color:#b8b8b8;font-weight:bold;">スウォッチ</div>
<div class="a" style="left:557px;top:54px;width:18px;height:9.5px;background:#414141;"></div>
<div class="t" style="left:558px;top:55.5px;font-size:6px;color:#f0f0f0;font-weight:bold;">カラー</div>
<div class="t" style="left:579px;top:55.5px;font-size:6px;color:#b8b8b8;font-weight:bold;">境界線</div>
<div class="t" style="left:596px;top:55.5px;font-size:6px;color:#b8b8b8;font-weight:bold;">ブラシ</div>
<div class="t" style="left:618px;top:55.5px;font-size:6px;color:#b8b8b8;font-weight:bold;">アピアランス</div>
<div class="t" style="left:652px;top:55.5px;font-size:6px;color:#b8b8b8;font-weight:bold;">アセット</div>
<div class="a" style="left:680px;top:57px;width:5px;height:5px;background:#aaa;"></div>
<div class="a" style="left:686px;top:60px;width:2px;height:2px;background:#aaa;"></div>
<div class="a" style="left:525px;top:56.5px;width:0.8px;height:5px;background:#4a4a4a;"></div>
<div class="a" style="left:555px;top:56.5px;width:0.8px;height:5px;background:#4a4a4a;"></div>
<div class="a" style="left:576px;top:56.5px;width:0.8px;height:5px;background:#4a4a4a;"></div>
<div class="a" style="left:593px;top:56.5px;width:0.8px;height:5px;background:#4a4a4a;"></div>
<div class="a" style="left:615px;top:56.5px;width:0.8px;height:5px;background:#4a4a4a;"></div>
<div class="a" style="left:649px;top:56.5px;width:0.8px;height:5px;background:#4a4a4a;"></div>
<div class="a" style="left:677px;top:56.5px;width:0.8px;height:5px;background:#4a4a4a;"></div>
<div class="a" style="left:516px;top:63.5px;width:174px;height:105.5px;background:#414141;"></div>
<div class="a" style="left:521.8000000000001px;top:68.2px;width:11.6px;height:11.6px;border-radius:50%;background:none;border:2.2px solid #000"></div>
<div class="a" style="left:527.0px;top:74.1px;width:13.0px;height:13.0px;border-radius:50%;background:#ececec;"></div>
<div class="a" style="left:521.2px;top:82.7px;width:5.0px;height:5.0px;border-radius:50%;background:#f4dede;border:1px solid #c04050"></div>
<svg class="a" style="left:535px;top:66px" width="7" height="7"><path d="M1,1 Q5,1 5,5" stroke="#aaa" stroke-width="1" fill="none"/></svg>
<svg class="a" style="left:545px;top:67px" width="10" height="10"><path d="M1.5,8.5 L7,3" stroke="#ccc" stroke-width="1.2"/><path d="M6,2 L8,4" stroke="#d8a040" stroke-width="2.2"/></svg>
<div class="a" style="left:555.8px;top:68.8px;width:6.4px;height:6.4px;border-radius:50%;background:#000;"></div>
<div class="a" style="left:567.3px;top:74px;width:80px;height:80px;border-radius:50%;background:conic-gradient(from 90deg,#f00,#ff0,#0f0,#0ff,#00f,#f0f,#f00);"></div>
<div class="a" style="left:575.8px;top:82.5px;width:63.0px;height:63.0px;border-radius:50%;background:#414141;"></div>
<svg class="a" style="left:0;top:0" width="690" height="450">
<defs>
<linearGradient id="tv" x1="0" y1="0" x2="0" y2="1"><stop offset="0" stop-color="#000"/><stop offset="1" stop-color="#fff"/></linearGradient>
<linearGradient id="th" x1="0" y1="0" x2="1" y2="0"><stop offset="0" stop-color="#f00" stop-opacity="0"/><stop offset="1" stop-color="#f00" stop-opacity="1"/></linearGradient>
</defs>
<polygon points="591,88 638,114.4 591,140" fill="url(#tv)"/>
<polygon points="591,88 638,114.4 591,140" fill="url(#th)"/>
<circle cx="642.4" cy="114" r="2.6" fill="#e33" stroke="#fff" stroke-width="1"/>
<circle cx="591.5" cy="138" r="3" fill="#f4f4f4" stroke="#888" stroke-width="0.6"/>
</svg>
<div class="t" style="left:520.5px;top:129.5px;font-size:6px;color:#ccc;font-weight:normal;">H: 0</div>
<div class="t" style="left:520.5px;top:137px;font-size:6px;color:#ccc;font-weight:normal;">S: 0</div>
<div class="t" style="left:520.5px;top:144.5px;font-size:6px;color:#ccc;font-weight:normal;">L: 92</div>
<div class="t" style="left:520.5px;top:152px;font-size:6px;color:#ccc;font-weight:normal;">不透明度</div>
<div class="a" style="left:520.8px;top:160.8px;width:6.4px;height:6.4px;border-radius:50%;background:#f0f0f0;"></div>
<svg class="a" style="left:530px;top:161px" width="120" height="6"><defs><pattern id="ck" width="3" height="3" patternUnits="userSpaceOnUse"><rect width="3" height="3" fill="#ddd"/><rect width="1.5" height="1.5" fill="#888"/><rect x="1.5" y="1.5" width="1.5" height="1.5" fill="#888"/></pattern></defs><rect x="1" y="1" width="116" height="4" rx="2" fill="url(#ck)"/><circle cx="117" cy="3" r="2.4" fill="#414141" stroke="#eee" stroke-width="1"/></svg>
<div class="a" style="left:656px;top:160.5px;width:20px;height:8px;background:#2c2c2c;"></div>
<div class="t" style="left:658px;top:161.5px;font-size:6px;color:#ddd;font-weight:normal;">100 %</div>
<div class="a" style="left:680px;top:160.5px;width:8.5px;height:8px;background:#2c2c2c;"></div>
<svg class="a" style="left:682px;top:163px" width="5" height="4"><polygon points="0,0 4,0 2,3" fill="#ccc"/></svg>
<div class="a" style="left:516px;top:169px;width:174px;height:5px;background:#2a2a2a;"></div>
<div class="a" style="left:516px;top:174px;width:174px;height:10px;background:#303030;"></div>
<div class="a" style="left:519px;top:175.8px;width:6.5px;height:8.4px;background:#262626;"></div>
<div class="a" style="left:525.5px;top:174px;width:24px;height:10px;background:#3a3a3a;"></div>
<div class="t" style="left:527px;top:175.5px;font-size:6px;color:#f0f0f0;font-weight:bold;">レイヤー</div>
<div class="t" style="left:553px;top:175.5px;font-size:6px;color:#b8b8b8;font-weight:bold;">エフ</div>
<div class="t" style="left:569px;top:175.5px;font-size:6px;color:#b8b8b8;font-weight:bold;">スタ</div>
<div class="t" style="left:588px;top:175.5px;font-size:6px;color:#b8b8b8;font-weight:bold;">文字</div>
<div class="t" style="left:604px;top:175.5px;font-size:6px;color:#b8b8b8;font-weight:bold;">スト</div>
<div class="t" style="left:622px;top:175.5px;font-size:6px;color:#b8b8b8;font-weight:bold;">テキ</div>
<div class="t" style="left:641px;top:175.5px;font-size:6px;color:#b8b8b8;font-weight:bold;">シン</div>
<div class="t" style="left:668px;top:175.5px;font-size:6px;color:#b8b8b8;font-weight:bold;">履歴</div>
<div class="a" style="left:680px;top:177px;width:6px;height:5px;background:#bbb;"></div>
<div class="a" style="left:551px;top:176.5px;width:0.8px;height:5px;background:#4a4a4a;"></div>
<div class="a" style="left:566px;top:176.5px;width:0.8px;height:5px;background:#4a4a4a;"></div>
<div class="a" style="left:585px;top:176.5px;width:0.8px;height:5px;background:#4a4a4a;"></div>
<div class="a" style="left:601px;top:176.5px;width:0.8px;height:5px;background:#4a4a4a;"></div>
<div class="a" style="left:619px;top:176.5px;width:0.8px;height:5px;background:#4a4a4a;"></div>
<div class="a" style="left:638px;top:176.5px;width:0.8px;height:5px;background:#4a4a4a;"></div>
<div class="a" style="left:657px;top:176.5px;width:0.8px;height:5px;background:#4a4a4a;"></div>
<div class="a" style="left:677px;top:176.5px;width:0.8px;height:5px;background:#4a4a4a;"></div>
<div class="a" style="left:516px;top:184px;width:174px;height:14.5px;background:#383838;"></div>
<div class="t" style="left:519px;top:188px;font-size:6px;color:#ddd;font-weight:bold;">不透明度</div>
<div class="a" style="left:546px;top:186px;width:25px;height:10px;background:#333;"></div>
<div class="t" style="left:548px;top:188px;font-size:6px;color:#888;font-weight:normal;">100 %</div>
<svg class="a" style="left:564px;top:190px" width="5" height="4"><polygon points="0,0 4,0 2,3" fill="#888"/></svg>
<div class="a" style="left:573px;top:186px;width:93px;height:10px;background:#333;"></div>
<div class="t" style="left:576px;top:188px;font-size:6px;color:#777;font-weight:bold;">通常</div>
<div class="a" style="left:661px;top:188.5px;width:4px;height:1px;background:#777;"></div>
<div class="a" style="left:661px;top:191px;width:4px;height:1px;background:#777;"></div>
<svg class="a" style="left:668px;top:187.5px" width="10" height="10"><circle cx="5" cy="5" r="3" fill="none" stroke="#d0d0d0" stroke-width="2.6" stroke-dasharray="1.5 0.9"/><circle cx="5" cy="5" r="2.6" fill="#d0d0d0"/><circle cx="5" cy="5" r="1.1" fill="#3a3a3a"/></svg>
<div class="a" style="left:681px;top:189px;width:4px;height:6px;background:#bbb;border-radius:1px"></div>
<div class="a" style="left:516px;top:198.5px;width:174px;height:164.5px;background:#2e2e2e;"></div>
<div class="a" style="left:516px;top:199px;width:165px;height:17px;background:#393939;"></div>
<div class="a" style="left:527px;top:200px;width:16px;height:15px;background:#1f1f1f;border:1px solid #2a2a2a"></div>
<div class="t" style="left:546px;top:205px;font-size:6px;color:#ddd;font-weight:normal;">(カーブ)</div>
<svg class="a" style="left:666px;top:203px" width="8" height="8"><path d="M1.5,4.5 L3.2,6.5 L6.5,1.5" stroke="#ddd" stroke-width="1" fill="none"/></svg>
<div class="a" style="left:681px;top:198.5px;width:9px;height:164.5px;background:#353535;"></div>
<div class="a" style="left:516px;top:363.5px;width:174px;height:12.5px;background:#3b3b3b;"></div>
<svg class="a" style="left:519px;top:365px" width="10" height="9"><path d="M1,3 L5,1 L9,3 L5,5 Z M1,5 L5,7 L9,5 M1,7 L5,9 L9,7" stroke="#ddd" stroke-width="0.8" fill="none"/></svg>
<div class="a" style="left:597px;top:366px;width:7px;height:7px;background:#d8d8d8;"></div>
<div class="a" style="left:598.3px;top:367.3px;width:4.4px;height:4.4px;border-radius:50%;background:#3b3b3b;"></div>
<svg class="a" style="left:607px;top:365px" width="9" height="9"><circle cx="4.5" cy="4.5" r="3.3" fill="#777" stroke="#ccc" stroke-width="0.8"/><path d="M4.5,1.2 A3.3,3.3 0 0 1 4.5,7.8 Z" fill="#ddd"/></svg>
<svg class="a" style="left:617px;top:365px" width="10" height="9"><path d="M2,8 Q4,8 4,5 L4.5,3 Q5,1.5 7,1.5 M3,4.5 H6 M6,5 L9,8 M9,5 L6,8" stroke="#ccc" stroke-width="0.9" fill="none"/></svg>
<svg class="a" style="left:656px;top:365px" width="8" height="9"><path d="M1.5,1.5 H5 L6.5,3 V7.5 H1.5 Z" fill="none" stroke="#ccc" stroke-width="0.9"/><path d="M3,5 H5 M4,4 V6" stroke="#ccc" stroke-width="0.8"/></svg>
<div class="a" style="left:668px;top:366px;width:6px;height:7px;background:#8a8a8a;border:1px solid #bbb"></div>
<svg class="a" style="left:681px;top:365px" width="7" height="9"><path d="M1,2 H6 M2,2 V8 H5 V2 M3,1 H4" stroke="#ccc" stroke-width="1" fill="#aaa"/></svg>
<div class="a" style="left:516px;top:376px;width:174px;height:11px;background:#2f2f2f;"></div>
<div class="a" style="left:526px;top:377px;width:13px;height:10px;background:#414141;"></div>
<div class="t" style="left:528px;top:378.5px;font-size:6px;color:#f0f0f0;font-weight:bold;">変形</div>
<div class="t" style="left:543px;top:378.5px;font-size:6px;color:#b8b8b8;font-weight:bold;">履歴</div>
<div class="t" style="left:557px;top:378.5px;font-size:6px;color:#b8b8b8;font-weight:normal;">ナビゲーター</div>
<div class="a" style="left:516px;top:387px;width:174px;height:51px;background:#414141;"></div>
<div class="a" style="left:526px;top:398px;width:18.5px;height:18.5px;background:#646464;border:1px solid #555"></div>
<div class="t" style="left:555.5px;top:396.5px;font-size:6px;color:#ddd;font-weight:bold;">X:</div>
<div class="t" style="left:597.5px;top:396.5px;font-size:6px;color:#ddd;font-weight:bold;">W:</div>
<div class="t" style="left:555.5px;top:408px;font-size:6px;color:#ddd;font-weight:bold;">Y:</div>
<div class="t" style="left:597.5px;top:408px;font-size:6px;color:#ddd;font-weight:bold;">H:</div>
<div class="t" style="left:555.5px;top:424px;font-size:6px;color:#ddd;font-weight:bold;">R:</div>
<div class="t" style="left:597.5px;top:424px;font-size:6px;color:#ddd;font-weight:bold;">S:</div>
<div class="a" style="left:560.5px;top:394px;width:31px;height:9.5px;background:#303030;"></div>
<div class="t" style="left:562.5px;top:395.5px;font-size:6px;color:#8a8a8a;font-weight:normal;">0 pt</div>
<div class="a" style="left:560.5px;top:405.5px;width:31px;height:9.5px;background:#303030;"></div>
<div class="t" style="left:562.5px;top:407.0px;font-size:6px;color:#8a8a8a;font-weight:normal;">0 pt</div>
<div class="a" style="left:560.5px;top:422px;width:31px;height:9.5px;background:#303030;"></div>
<div class="t" style="left:562.5px;top:423.5px;font-size:6px;color:#8a8a8a;font-weight:normal;">0 °</div>
<div class="a" style="left:604.5px;top:394px;width:31px;height:9.5px;background:#303030;"></div>
<div class="t" style="left:606.5px;top:395.5px;font-size:6px;color:#8a8a8a;font-weight:normal;">0 pt</div>
<div class="a" style="left:604.5px;top:405.5px;width:31px;height:9.5px;background:#303030;"></div>
<div class="t" style="left:606.5px;top:407.0px;font-size:6px;color:#8a8a8a;font-weight:normal;">0 pt</div>
<div class="a" style="left:604.5px;top:422px;width:31px;height:9.5px;background:#303030;"></div>
<div class="t" style="left:606.5px;top:423.5px;font-size:6px;color:#8a8a8a;font-weight:normal;">0 °</div>
<div class="a" style="left:641px;top:400px;width:2px;height:8px;background:#777;"></div>
<div class="a" style="left:516px;top:438px;width:174px;height:12px;background:#333;"></div>
</div></body></html>
